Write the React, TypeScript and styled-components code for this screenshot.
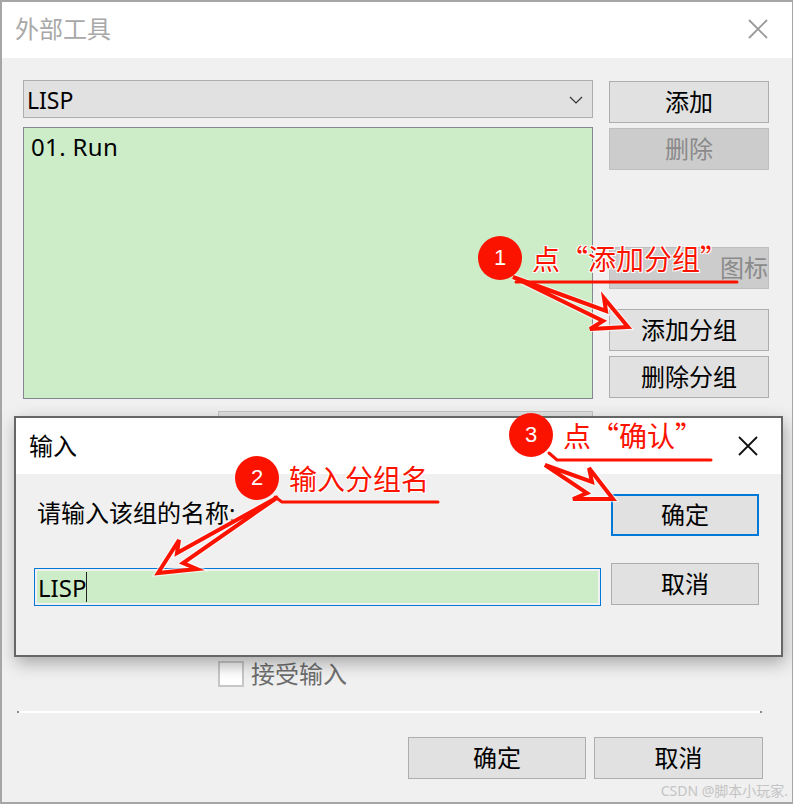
import React from "react";
import styled, { createGlobalStyle } from "styled-components";

const FONT = `"Noto Sans", "Noto Sans CJK SC", sans-serif`;
const CJK = `"Noto Sans CJK SC", sans-serif`;

const Global = createGlobalStyle`
  html, body { margin: 0; padding: 0; background: #f0f0f0; }
  * { box-sizing: border-box; }
`;

function App() {
  return (
    <Win>
      <Global />
      <TitleBar>
        <WinTitle>外部工具</WinTitle>
        <CloseIcon size={20} color="#9a9a9a" />
      </TitleBar>
      <Body>
        <TopGrid>
          <LeftCol>
            <Combo>
              LISP
              <svg width="14" height="8" viewBox="0 0 14 8">
                <path d="M1 1l6 6 6-6" fill="none" stroke="#333" strokeWidth="1.2" />
              </svg>
            </Combo>
            <ListBox>01. Run</ListBox>
          </LeftCol>
          <RightCol>
            <Btn>添加</Btn>
            <Btn $disabled>删除</Btn>
            <Btn $disabled $top={72} $end>图标</Btn>
            <Btn $top={15}>添加分组</Btn>
            <Btn>删除分组</Btn>
          </RightCol>
        </TopGrid>
        <GhostField />
        <CheckRow>
          <CheckBox />
          <CheckLabel>接受输入</CheckLabel>
        </CheckRow>
        <Groove />
        <Footer>
          <FooterBtn $w={178}>确定</FooterBtn>
          <FooterBtn $w={169}>取消</FooterBtn>
        </Footer>
      </Body>

      <Dialog>
        <DialogTitleBar>
          <DialogTitle>输入</DialogTitle>
          <CloseIcon size={20} color="#111" />
        </DialogTitleBar>
        <DialogBody>
          <DialogLeft>
            <Prompt>请输入该组的名称:</Prompt>
            <InputBox>
              LISP
              <Caret />
            </InputBox>
          </DialogLeft>
          <DialogRight>
            <DialogBtn $focus>确定</DialogBtn>
            <DialogBtn>取消</DialogBtn>
          </DialogRight>
        </DialogBody>
      </Dialog>

      <Marks viewBox="0 0 793 804" width="793" height="804">
        <g fill="none" stroke="#fff" strokeWidth="6.5" strokeLinejoin="miter" opacity="0.6">
          <path d={ARROW_1} />
          <path d={ARROW_2} />
          <path d={ARROW_3} />
        </g>
        <g fill="none" stroke="#fb1300" strokeWidth="4" strokeLinejoin="miter" strokeLinecap="round">
          <path d={ARROW_1} />
          <path d={ARROW_2} />
          <path d={ARROW_3} />
        </g>
        <g fill="none" stroke="#fb1300" strokeWidth="3" strokeLinecap="round">
          <path d="M516 282H737" />
          <path d="M275 497l7 5H438" />
          <path d="M549 453l8 7H711" />
        </g>
      </Marks>

      <Badge $x={478} $y={236}>1</Badge>
      <Note $x={532} $y={239}>点“添加分组”</Note>
      <Badge $x={235} $y={456}>2</Badge>
      <Note $x={289} $y={459}>输入分组名</Note>
      <Badge $x={509} $y={413}>3</Badge>
      <Note $x={563} $y={416}>点“确认”</Note>

      <Watermark>CSDN @脚本小玩家.</Watermark>
    </Win>
  );
}

function CloseIcon({ size, color }: { size: number; color: string }) {
  return (
    <svg width={size} height={size} viewBox="0 0 20 20">
      <path d="M1 1l18 18M19 1L1 19" stroke={color} strokeWidth="1.8" fill="none" />
    </svg>
  );
}

const ARROW_1 = "M513 277L606 311L604 298L628 327L590 329L603 321Z";
const ARROW_2 = "M278 497L177 553L179 540L158 573L197 569L183 563Z";
const ARROW_3 = "M545 465L592 482L589 468L613 499L573 499L587 493Z";

const Win = styled.div`
  position: relative;
  width: 793px;
  height: 804px;
  overflow: hidden;
  background: #f0f0f0;
  border: 2px solid #a6a6a6;
  border-right-width: 1px;
  font-family: ${FONT};
`;
const TitleBar = styled.div`
  height: 56px;
  display: flex;
  align-items: center;
  justify-content: space-between;
  padding: 0 24px 2px 13px;
  background: #fff;
`;
const WinTitle = styled.div`
  font-size: 24px;
  line-height: 34px;
  color: #a8a8a8;
`;
const Body = styled.div`
  padding: 22px 21px 0 21px;
`;
const TopGrid = styled.div`
  display: flex;
  justify-content: space-between;
  padding-right: 2px;
`;
const LeftCol = styled.div`
  width: 570px;
  display: flex;
  flex-direction: column;
  gap: 9px;
`;
const Combo = styled.div`
  height: 38px;
  display: flex;
  align-items: center;
  justify-content: space-between;
  padding: 1px 9px 0 3px;
  background: #e1e1e1;
  border: 1px solid #adadad;
  font-size: 23px;
  color: #000;
`;
const ListBox = styled.div`
  height: 272px;
  padding: 0 7px;
  background: #cdecc8;
  border: 1px solid #828790;
  font-size: 24px;
  letter-spacing: 0.35px;
  line-height: 38px;
  color: #000;
`;
const RightCol = styled.div`
  width: 160px;
  padding-top: 1px;
  display: flex;
  flex-direction: column;
  gap: 5px;
`;
const Btn = styled.div<{ $disabled?: boolean; $top?: number; $end?: boolean }>`
  height: 42px;
  margin-top: ${(p) => p.$top ?? 0}px;
  display: flex;
  align-items: center;
  justify-content: ${(p) => (p.$end ? "flex-end" : "center")};
  padding-bottom: 3px;
  font-size: 24px;
  border: 1px solid ${(p) => (p.$disabled ? "#bfbfbf" : "#adadad")};
  background: ${(p) => (p.$disabled ? "#cccccc" : "#e1e1e1")};
  color: ${(p) => (p.$disabled ? "#8a8a8a" : "#000")};
`;
const GhostField = styled.div`
  width: 375px;
  height: 30px;
  margin: 12px 0 0 195px;
  background: #e1e1e1;
  border: 1px solid #c4c4c4;
`;
const CheckRow = styled.div`
  margin: 220px 0 0 195px;
  display: flex;
  align-items: center;
  gap: 7px;
`;
const CheckBox = styled.div`
  width: 26px;
  height: 26px;
  border: 2px solid #c6c6c6;
  background: linear-gradient(#f0f0f0, #fff 60%);
`;
const CheckLabel = styled.span`
  font-size: 24px;
  line-height: 26px;
  color: #6d6d6d;
`;
const Groove = styled.div`
  width: 745px;
  height: 2px;
  margin: 24px 0 0 -6px;
  background: #fff;
  border-left: 2px solid #8a8a8a;
  border-right: 2px solid #8a8a8a;
`;
const Footer = styled.div`
  display: flex;
  justify-content: flex-end;
  gap: 8px;
  margin-top: 24px;
  padding-right: 8px;
`;
const FooterBtn = styled.div<{ $w: number }>`
  width: ${(p) => p.$w}px;
  height: 42px;
  display: flex;
  align-items: center;
  justify-content: center;
  padding-bottom: 3px;
  font-size: 24px;
  color: #000;
  background: #e1e1e1;
  border: 1px solid #adadad;
`;
const Dialog = styled.div`
  position: absolute;
  left: 12px;
  top: 414px;
  width: 769px;
  height: 241px;
  background: #f0f0f0;
  border: 2px solid #666;
  box-shadow: 2px 6px 16px rgba(0, 0, 0, 0.3);
`;
const DialogTitleBar = styled.div`
  height: 56px;
  display: flex;
  align-items: center;
  justify-content: space-between;
  padding: 0 23px 0 13px;
  background: #fff;
`;
const DialogTitle = styled.div`
  font-size: 24px;
  line-height: 34px;
  margin-top: -1px;
  color: #000;
`;
const DialogBody = styled.div`
  display: flex;
  justify-content: space-between;
  padding: 20px 22px 0 18px;
`;
const DialogLeft = styled.div`
  width: 567px;
`;
const Prompt = styled.div`
  height: 36px;
  padding: 4px 0 0 3px;
  font-size: 24px;
  line-height: 30px;
  color: #000;
`;
const InputBox = styled.div`
  margin-top: 38px;
  height: 38px;
  display: flex;
  align-items: center;
  padding-left: 3px;
  background: #cdecc8;
  border: 1px solid #0078d7;
  box-shadow: inset 0 0 0 2px #f0f0f0;
  font-size: 24px;
  color: #000;
`;
const Caret = styled.span`
  width: 1px;
  height: 30px;
  background: #222;
`;
const DialogRight = styled.div`
  width: 148px;
  display: flex;
  flex-direction: column;
  gap: 27px;
`;
const DialogBtn = styled.div<{ $focus?: boolean }>`
  height: 42px;
  display: flex;
  align-items: center;
  justify-content: center;
  padding-bottom: 3px;
  font-size: 24px;
  color: #000;
  background: #e1e1e1;
  border: ${(p) => (p.$focus ? "2px solid #0078d7" : "1px solid #adadad")};
`;
const Marks = styled.svg`
  position: absolute;
  left: -2px;
  top: -2px;
  pointer-events: none;
`;
const Badge = styled.div<{ $x: number; $y: number }>`
  position: absolute;
  left: ${(p) => p.$x - 2}px;
  top: ${(p) => p.$y - 2}px;
  width: 44px;
  height: 44px;
  border-radius: 50%;
  display: flex;
  align-items: center;
  justify-content: center;
  background: #fb1300;
  color: #fff;
  font-family: "Liberation Sans", sans-serif;
  font-size: 22px;
`;
const Note = styled.div<{ $x: number; $y: number }>`
  position: absolute;
  left: ${(p) => p.$x - 2}px;
  top: ${(p) => p.$y - 2}px;
  font-family: ${CJK};
  font-size: 28px;
  line-height: 38px;
  white-space: nowrap;
  color: #fb1300;
  text-shadow: 1px 1px 0 #fff, -1px -1px 0 #fff, 1px -1px 0 #fff, -1px 1px 0 #fff;
`;
const Watermark = styled.div`
  position: absolute;
  right: 4px;
  bottom: 2px;
  font-size: 14px;
  color: #c4c4c4;
`;
export default App;
